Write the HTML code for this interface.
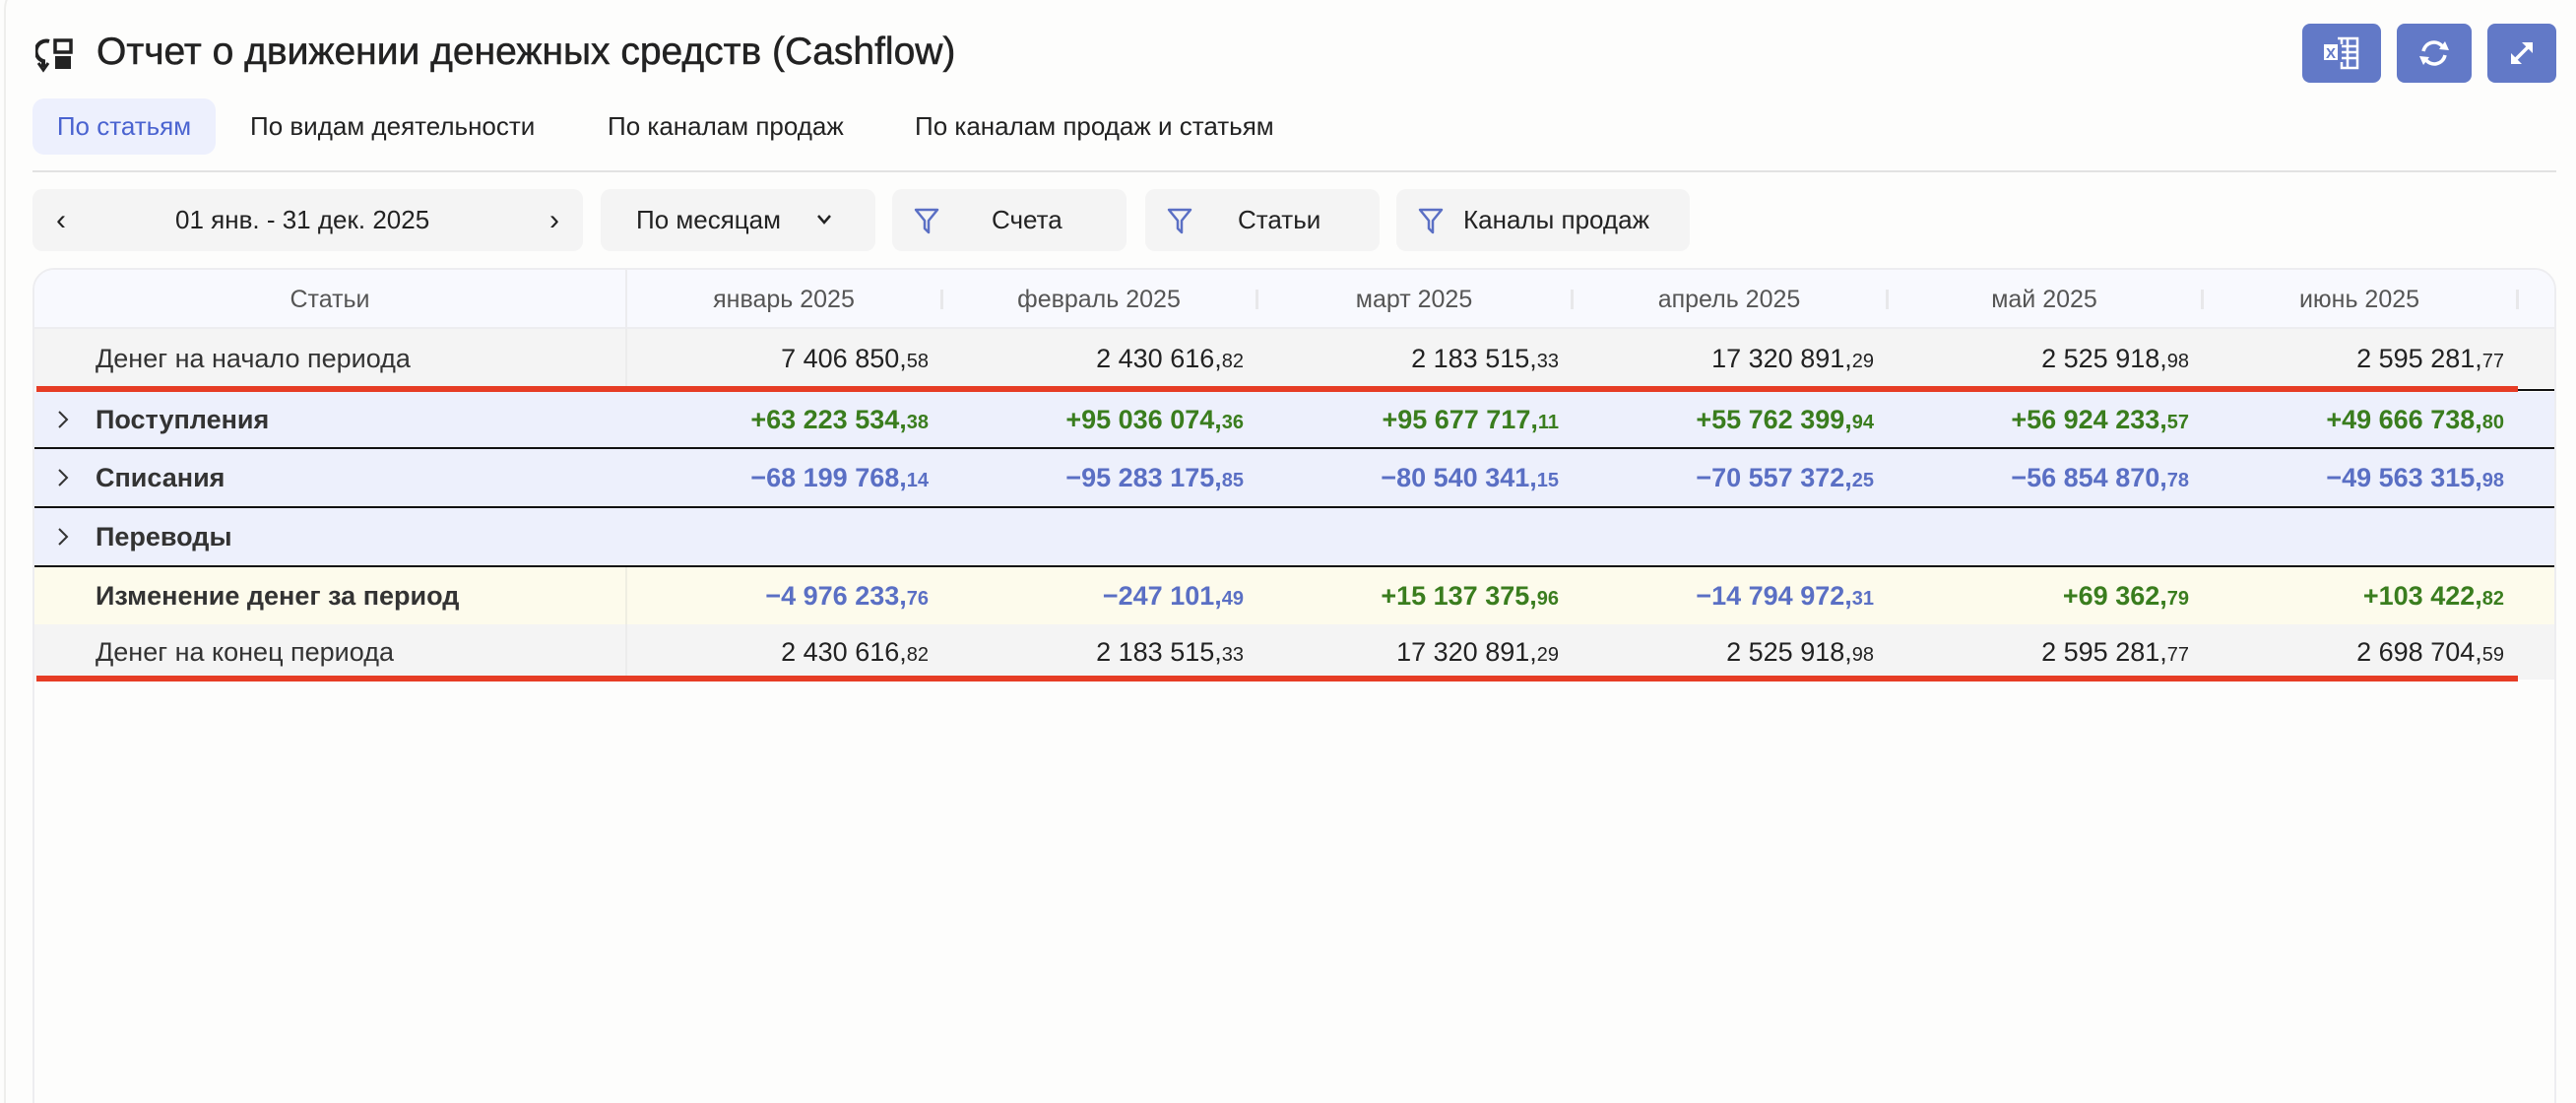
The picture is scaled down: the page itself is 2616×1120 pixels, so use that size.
<!DOCTYPE html>
<html style="width:2616px;height:1120px;overflow:hidden"><head><meta charset="utf-8"><style>
*{box-sizing:border-box;margin:0;padding:0}
body{width:2616px;height:1120px;background:#fdfdfc;font-family:"Liberation Sans",sans-serif;position:relative;overflow:hidden;color:#222}
#wrap{position:absolute;left:0;top:0;width:2616px;height:1120px;overflow:hidden}
.panel{position:absolute;left:4px;top:-20px;width:2640px;height:1170px;border:2px solid #eeeeec;border-radius:30px}
.title{position:absolute;left:98px;top:31px;font-size:39px;color:#222;-webkit-text-stroke:0.5px #222}
.tab{position:absolute;top:100px;height:57px;line-height:57px;font-size:26px;color:#222}
.btn{position:absolute;top:24px;height:60px;background:#6279c7;border-radius:8px;display:flex;align-items:center;justify-content:center}
.fbox{position:absolute;top:192px;height:63px;background:#f4f4f4;border-radius:10px;font-size:26px;line-height:63px;color:#222}
.tbl{position:absolute;left:33px;top:272px;width:2563px;height:870px;border:2px solid #ededf0;border-radius:22px 22px 0 0;overflow:hidden}
.row{position:absolute;left:0;width:2563px}
.cell{position:absolute;top:0;height:100%;display:flex;align-items:center;justify-content:flex-end;font-size:27px}
.cell small{font-size:20px}
.lab{position:absolute;left:62px;top:0;height:100%;display:flex;align-items:center;font-size:27px;color:#333}
.chev{position:absolute;left:22px;top:0;height:100%;display:flex;align-items:center}
.g{color:#3a7d1e;font-weight:bold}.b{color:#5a6fc4;font-weight:bold}
</style></head><body><div id="wrap">
<div class="panel"></div>
<svg style="position:absolute;left:36px;top:38px" width="44" height="36" viewBox="0 0 44 36"><path d="M14 4 A10 10 0 0 0 8 24 L8 30" fill="none" stroke="#222" stroke-width="4"/><path d="M3 26 L8 33 L13 26" fill="none" stroke="#222" stroke-width="3"/><rect x="20" y="3" width="16" height="12" fill="none" stroke="#222" stroke-width="3.5"/><rect x="20" y="19" width="16" height="13" fill="#222"/></svg>
<div class="title">Отчет о движении денежных средств (Cashflow)</div>
<div class="tab" style="left:33px;width:186px;background:#edf0fd;border-radius:12px;color:#4a63d0;text-align:center">По статьям</div>
<div class="tab" style="left:254px">По видам деятельности</div>
<div class="tab" style="left:617px">По каналам продаж</div>
<div class="tab" style="left:929px">По каналам продаж и статьям</div>
<div style="position:absolute;left:33px;top:173px;width:2563px;height:2px;background:#e2e2e2"></div>
<div class="btn" style="left:2338px;width:80px"><svg width="40" height="34" viewBox="0 0 40 34"><rect x="2" y="8" width="14" height="16" fill="#fff"/><text x="4" y="22" font-size="15" font-weight="bold" fill="#6279c7" font-family="Liberation Sans">X</text><path d="M16 2H36V32H20V26M20 2V8M20 10H36M20 16H36M20 22H36M26 2V32" fill="none" stroke="#fff" stroke-width="2.5"/></svg></div>
<div class="btn" style="left:2434px;width:76px"><svg width="34" height="30" viewBox="0 0 34 30"><path d="M6 13A11 11 0 0 1 26 9M28 17A11 11 0 0 1 8 21" fill="none" stroke="#fff" stroke-width="3.5"/><path d="M22 11L32 12L28 3Z M12 19L2 18L6 27Z" fill="#fff"/></svg></div>
<div class="btn" style="left:2526px;width:70px"><svg width="30" height="30" viewBox="0 0 30 30"><path d="M6 24L24 6" stroke="#fff" stroke-width="3.5"/><path d="M15 4H26V15Z M4 15V26H15Z" fill="#fff"/></svg></div>

<div class="fbox" style="left:33px;width:559px"><span style="position:absolute;left:24px;font-size:30px">‹</span><span style="position:absolute;left:145px">01 янв. - 31 дек. 2025</span><span style="position:absolute;right:24px;font-size:30px">›</span></div>
<div class="fbox" style="left:610px;width:279px;padding-left:36px">По месяцам<svg style="position:absolute;left:218px;top:24px" width="18" height="14"><path d="M3 3L9 10L15 3" fill="none" stroke="#222" stroke-width="2.5"/></svg></div>
<div class="fbox" style="left:906px;width:238px"><svg style="position:absolute;left:22px;top:18px" width="26" height="28"><path d="M2 3H24L15 14V26L11 22V14Z" fill="none" stroke="#5a6fc4" stroke-width="2.5" stroke-linejoin="round"/></svg><span style="position:absolute;left:101px">Счета</span></div>
<div class="fbox" style="left:1163px;width:238px"><svg style="position:absolute;left:22px;top:18px" width="26" height="28"><path d="M2 3H24L15 14V26L11 22V14Z" fill="none" stroke="#5a6fc4" stroke-width="2.5" stroke-linejoin="round"/></svg><span style="position:absolute;left:94px">Статьи</span></div>
<div class="fbox" style="left:1418px;width:298px"><svg style="position:absolute;left:22px;top:18px" width="26" height="28"><path d="M2 3H24L15 14V26L11 22V14Z" fill="none" stroke="#5a6fc4" stroke-width="2.5" stroke-linejoin="round"/></svg><span style="position:absolute;left:68px">Каналы продаж</span></div>

<div class="tbl">
<div class="row" style="top:0;height:60px;background:#f8f9fe;border-bottom:2px solid #ededf0;color:#555;font-size:25px">
<div style="position:absolute;left:0;width:600px;text-align:center;line-height:60px">Статьи</div>
<div style="position:absolute;left:600px;top:0;width:2px;height:60px;background:#ececef"></div>
<div style="position:absolute;left:602px;width:318px;text-align:center;line-height:60px">январь 2025</div>
<div style="position:absolute;left:922px;width:318px;text-align:center;line-height:60px">февраль 2025</div>
<div style="position:absolute;left:1242px;width:318px;text-align:center;line-height:60px">март 2025</div>
<div style="position:absolute;left:1562px;width:318px;text-align:center;line-height:60px">апрель 2025</div>
<div style="position:absolute;left:1882px;width:318px;text-align:center;line-height:60px">май 2025</div>
<div style="position:absolute;left:2202px;width:318px;text-align:center;line-height:60px">июнь 2025</div>
<div style="position:absolute;left:920px;top:20px;width:3px;height:20px;background:#e8e8ea"></div>
<div style="position:absolute;left:1240px;top:20px;width:3px;height:20px;background:#e8e8ea"></div>
<div style="position:absolute;left:1560px;top:20px;width:3px;height:20px;background:#e8e8ea"></div>
<div style="position:absolute;left:1880px;top:20px;width:3px;height:20px;background:#e8e8ea"></div>
<div style="position:absolute;left:2200px;top:20px;width:3px;height:20px;background:#e8e8ea"></div>
<div style="position:absolute;left:2520px;top:20px;width:3px;height:20px;background:#e8e8ea"></div>
</div>
<div class="row" style="top:60px;height:60px;background:#f4f4f4"><div class="lab">Денег на начало периода</div>
<div style="position:absolute;left:600px;top:0;width:2px;height:60px;background:#ececec"></div>
<div class="cell" style="left:602px;width:306px"><span>7 406 850,<small>58</small></span></div><div class="cell" style="left:922px;width:306px"><span>2 430 616,<small>82</small></span></div><div class="cell" style="left:1242px;width:306px"><span>2 183 515,<small>33</small></span></div><div class="cell" style="left:1562px;width:306px"><span>17 320 891,<small>29</small></span></div><div class="cell" style="left:1882px;width:306px"><span>2 525 918,<small>98</small></span></div><div class="cell" style="left:2202px;width:306px"><span>2 595 281,<small>77</small></span></div></div>
<div style="position:absolute;left:2px;top:118px;width:2520px;height:6px;background:#e63c25"></div>
<div style="position:absolute;left:2522px;top:121px;width:40px;height:2px;background:#111"></div>
<div class="row" style="top:124px;height:58px;background:#edf0fc;border-bottom:2px solid #111"><div class="chev"><svg width="14" height="22"><path d="M3 3L11 11L3 19" fill="none" stroke="#333" stroke-width="2"/></svg></div><div class="lab" style="font-weight:bold">Поступления</div>
<div class="cell g" style="left:602px;width:306px"><span>+63 223 534,<small>38</small></span></div><div class="cell g" style="left:922px;width:306px"><span>+95 036 074,<small>36</small></span></div><div class="cell g" style="left:1242px;width:306px"><span>+95 677 717,<small>11</small></span></div><div class="cell g" style="left:1562px;width:306px"><span>+55 762 399,<small>94</small></span></div><div class="cell g" style="left:1882px;width:306px"><span>+56 924 233,<small>57</small></span></div><div class="cell g" style="left:2202px;width:306px"><span>+49 666 738,<small>80</small></span></div></div>
<div class="row" style="top:182px;height:60px;background:#edf0fc;border-bottom:2px solid #111"><div class="chev"><svg width="14" height="22"><path d="M3 3L11 11L3 19" fill="none" stroke="#333" stroke-width="2"/></svg></div><div class="lab" style="font-weight:bold">Списания</div>
<div class="cell b" style="left:602px;width:306px"><span>−68 199 768,<small>14</small></span></div><div class="cell b" style="left:922px;width:306px"><span>−95 283 175,<small>85</small></span></div><div class="cell b" style="left:1242px;width:306px"><span>−80 540 341,<small>15</small></span></div><div class="cell b" style="left:1562px;width:306px"><span>−70 557 372,<small>25</small></span></div><div class="cell b" style="left:1882px;width:306px"><span>−56 854 870,<small>78</small></span></div><div class="cell b" style="left:2202px;width:306px"><span>−49 563 315,<small>98</small></span></div></div>
<div class="row" style="top:242px;height:60px;background:#edf0fc;border-bottom:2px solid #111"><div class="chev"><svg width="14" height="22"><path d="M3 3L11 11L3 19" fill="none" stroke="#333" stroke-width="2"/></svg></div><div class="lab" style="font-weight:bold">Переводы</div></div>
<div class="row" style="top:302px;height:58px;background:#fdfbec"><div class="lab" style="font-weight:bold">Изменение денег за период</div>
<div style="position:absolute;left:600px;top:0;width:2px;height:58px;background:#efeee2"></div>
<div class="cell b" style="left:602px;width:306px"><span>−4 976 233,<small>76</small></span></div><div class="cell b" style="left:922px;width:306px"><span>−247 101,<small>49</small></span></div><div class="cell g" style="left:1242px;width:306px"><span>+15 137 375,<small>96</small></span></div><div class="cell b" style="left:1562px;width:306px"><span>−14 794 972,<small>31</small></span></div><div class="cell g" style="left:1882px;width:306px"><span>+69 362,<small>79</small></span></div><div class="cell g" style="left:2202px;width:306px"><span>+103 422,<small>82</small></span></div></div>
<div class="row" style="top:360px;height:56px;background:#f4f4f4"><div class="lab">Денег на конец периода</div>
<div style="position:absolute;left:600px;top:0;width:2px;height:56px;background:#ececec"></div>
<div class="cell" style="left:602px;width:306px"><span>2 430 616,<small>82</small></span></div><div class="cell" style="left:922px;width:306px"><span>2 183 515,<small>33</small></span></div><div class="cell" style="left:1242px;width:306px"><span>17 320 891,<small>29</small></span></div><div class="cell" style="left:1562px;width:306px"><span>2 525 918,<small>98</small></span></div><div class="cell" style="left:1882px;width:306px"><span>2 595 281,<small>77</small></span></div><div class="cell" style="left:2202px;width:306px"><span>2 698 704,<small>59</small></span></div></div>
<div style="position:absolute;left:2px;top:412px;width:2520px;height:6px;background:#e63c25"></div>
</div>
</div></body></html>
